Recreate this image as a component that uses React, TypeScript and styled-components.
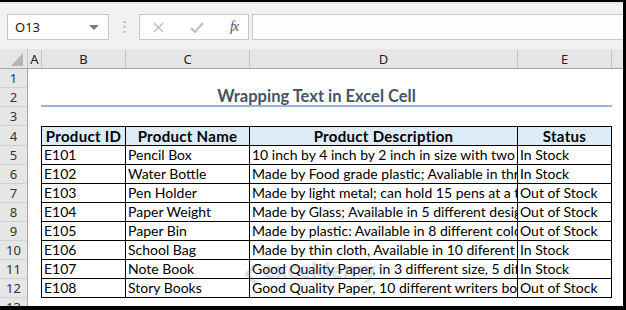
import React from "react";
import styled, { createGlobalStyle } from "styled-components";

const GlobalStyle = createGlobalStyle`
  html, body { margin: 0; padding: 0; background: #000; }
  * { box-sizing: border-box; }
`;

interface IProduct {
  id: string;
  name: string;
  description: string;
  status: string;
}

const products: IProduct[] = [
  { id: "E101", name: "Pencil Box", description: "10 inch by 4 inch by 2 inch in size with two compartments", status: "In Stock" },
  { id: "E102", name: "Water Bottle", description: "Made by Food grade plastic; Avaliable in three colors", status: "In Stock" },
  { id: "E103", name: "Pen Holder", description: "Made by light metal; can hold 15 pens at a time", status: "Out of Stock" },
  { id: "E104", name: "Paper Weight", description: "Made by Glass; Available in 5 different designs", status: "Out of Stock" },
  { id: "E105", name: "Paper Bin", description: "Made by plastic: Available in 8 different colors", status: "Out of Stock" },
  { id: "E106", name: "School Bag", description: "Made by thin cloth, Available in 10 diferent colors", status: "In Stock" },
  { id: "E107", name: "Note Book", description: "Good Quality Paper, in 3 different size, 5 different colors", status: "In Stock" },
  { id: "E108", name: "Story Books", description: "Good Quality Paper, 10 different writers books", status: "Out of Stock" },
];

// column widths in px (row header, A, B, C, D, E)
const W = { hdr: 28, a: 13, b: 85, c: 124, d: 268, e: 94 };

const Frame = styled.div`
  width: 626px;
  height: 310px;
  background: #000;
  padding: 2px 3px 4px 0;
`;

const Window = styled.div`
  height: 100%;
  display: flex;
  flex-direction: column;
  background: #fff;
  overflow: hidden;
  position: relative;
  font-family: "Lato", "Liberation Sans", sans-serif;
`;

const Toolbar = styled.div`
  height: 47px;
  flex: none;
  display: flex;
  align-items: flex-start;
  padding: 12px 0 0 7px;
  background: linear-gradient(#e4e4e4 0px, #f1f1f1 3px);
`;

const NameBox = styled.div`
  width: 102px;
  height: 26px;
  display: flex;
  align-items: center;
  justify-content: space-between;
  padding: 0 9px 0 7px;
  background: #fff;
  border: 1px solid #c6c6c6;
  font-family: "Noto Sans", "Open Sans", sans-serif;
  font-size: 13px;
  color: #222;
`;

const DropArrow = styled.span`
  width: 0;
  height: 0;
  border-left: 5px solid transparent;
  border-right: 5px solid transparent;
  border-top: 5px solid #7a7a7a;
`;

const Grip = styled.div`
  width: 30px;
  height: 26px;
  display: flex;
  align-items: center;
  justify-content: center;
`;

const FormulaButtons = styled.div`
  width: 110px;
  height: 26px;
  display: flex;
  align-items: center;
  justify-content: space-between;
  padding: 0 10px 0 13px;
  background: #fff;
  border: 1px solid #c6c6c6;
`;

const Fx = styled.span`
  font-family: "Liberation Serif", serif;
  font-style: italic;
  font-size: 14px;
  color: #555;
  letter-spacing: -1px;
`;

const FormulaInput = styled.div`
  flex: 1;
  height: 26px;
  margin-left: 3px;
  background: #fdfdfd;
  border: 1px solid #c6c6c6;
  border-right: none;
`;

const ColumnHeader = styled.div`
  height: 20px;
  flex: none;
  display: flex;
  background: #e6e6e6;
  border-bottom: 1px solid #a5a5a5;
`;

const Corner = styled.div`
  width: ${W.hdr}px;
  flex: none;
  display: flex;
  align-items: flex-end;
  justify-content: flex-end;
  padding: 0 4px 2px 0;
  border-right: 1px solid #c4c4c4;
`;

const ColHead = styled.div<{ $w: number; $grow?: boolean }>`
  width: ${(p) => p.$w}px;
  flex: ${(p) => (p.$grow ? 1 : "none")};
  display: flex;
  align-items: center;
  justify-content: center;
  border-right: ${(p) => (p.$grow ? "none" : "1px solid #c4c4c4")};
  margin-top: 1px;
  font-family: "Noto Sans", "Open Sans", sans-serif;
  font-size: 13px;
  color: #222;
`;

const Row = styled.div<{ $h?: number }>`
  height: ${(p) => p.$h ?? 19}px;
  flex: none;
  display: flex;
`;

const RowNum = styled.div`
  width: ${W.hdr}px;
  flex: none;
  display: flex;
  align-items: center;
  justify-content: center;
  background: #e6e6e6;
  border-right: 1px solid #a5a5a5;
  border-bottom: 1px solid #d0d0d0;
  font-family: "Noto Sans", "Open Sans", sans-serif;
  font-size: 13px;
  color: #333;
`;

const Cell = styled.div<{
  $w: number;
  $left?: boolean;
  $top?: boolean;
  $head?: boolean;
}>`
  width: ${(p) => p.$w}px;
  flex: none;
  overflow: hidden;
  white-space: nowrap;
  padding: 0 2px;
  line-height: 18px;
  font-size: ${(p) => (p.$head ? 15 : 14)}px;
  letter-spacing: ${(p) => (p.$head ? "0.3px" : "0")};
  color: #000;
  border-right: 1px solid #000;
  border-bottom: 1px solid #000;
  border-left: ${(p) => (p.$left ? "1px solid #000" : "none")};
  border-top: ${(p) => (p.$top ? "1px solid #000" : "none")};
  background: ${(p) => (p.$head ? "#ddebf7" : "#fff")};
  font-weight: ${(p) => (p.$head ? 700 : 400)};
  text-align: ${(p) => (p.$head ? "center" : "left")};
`;

const Blank = styled.div<{ $w: number }>`
  width: ${(p) => p.$w}px;
  flex: none;
`;

const TitleCell = styled.div`
  width: ${W.b + W.c + W.d + W.e}px;
  flex: none;
  padding-right: 20px;
  text-align: center;
  font-size: 16.5px;
  font-weight: 700;
  line-height: 17px;
  color: #44546a;
  border-bottom: 2px solid #9db3df;
`;

const Watermark = styled.div`
  position: absolute;
  left: 242px;
  top: 258px;
  display: flex;
  align-items: center;
  gap: 3px;
  opacity: 0.22;
  pointer-events: none;
`;

const WatermarkText = styled.div`
  display: flex;
  flex-direction: column;
  line-height: 1;
  color: #4a6fb5;
  font-family: "Open Sans", sans-serif;
  font-weight: 700;
  font-size: 21px;
  small {
    font-size: 7px;
    font-weight: 400;
    letter-spacing: 1px;
  }
`;

function TableRow({ n, p }: { n: number; p: IProduct }) {
  return (
    <Row>
      <RowNum>{n}</RowNum>
      <Blank $w={W.a} />
      <Cell $w={W.b} $left>{p.id}</Cell>
      <Cell $w={W.c}>{p.name}</Cell>
      <Cell $w={W.d}>{p.description}</Cell>
      <Cell $w={W.e}>{p.status}</Cell>
    </Row>
  );
}

export default function App() {
  return (
    <Frame>
      <GlobalStyle />
      <Window>
        <Toolbar>
          <NameBox>
            O13
            <DropArrow />
          </NameBox>
          <Grip>
            <svg width="3" height="12" viewBox="0 0 3 12">
              <rect x="0.5" y="0" width="2" height="2" fill="#b3b3b3" />
              <rect x="0.5" y="5" width="2" height="2" fill="#b3b3b3" />
              <rect x="0.5" y="10" width="2" height="2" fill="#b3b3b3" />
            </svg>
          </Grip>
          <FormulaButtons>
            <svg width="11" height="11" viewBox="0 0 11 11">
              <path d="M1 1 L10 10 M10 1 L1 10" stroke="#bdbdbd" strokeWidth="1.4" />
            </svg>
            <svg width="14" height="11" viewBox="0 0 14 11">
              <path d="M1 6 L5 10 L13 1" stroke="#bdbdbd" strokeWidth="2" fill="none" />
            </svg>
            <Fx>fx</Fx>
          </FormulaButtons>
          <FormulaInput />
        </Toolbar>

        <ColumnHeader>
          <Corner>
            <svg width="12" height="13" viewBox="0 0 12 13">
              <polygon points="12,0 12,13 0,13" fill="#b5b5b5" />
            </svg>
          </Corner>
          <ColHead $w={W.a + 1}>A</ColHead>
          <ColHead $w={W.b - 1}>B</ColHead>
          <ColHead $w={W.c}>C</ColHead>
          <ColHead $w={W.d}>D</ColHead>
          <ColHead $w={W.e}>E</ColHead>
          <ColHead $w={0} $grow />
        </ColumnHeader>

        <Row>
          <RowNum>1</RowNum>
        </Row>
        <Row>
          <RowNum>2</RowNum>
          <Blank $w={W.a} />
          <TitleCell>Wrapping Text in Excel Cell</TitleCell>
        </Row>
        <Row>
          <RowNum>3</RowNum>
        </Row>
        <Row $h={20}>
          <RowNum>4</RowNum>
          <Blank $w={W.a} />
          <Cell $w={W.b} $left $top $head>Product ID</Cell>
          <Cell $w={W.c} $top $head>Product Name</Cell>
          <Cell $w={W.d} $top $head>Product Description</Cell>
          <Cell $w={W.e} $top $head>Status</Cell>
        </Row>
        {products.map((p, i) => (
          <TableRow key={p.id} n={i + 5} p={p} />
        ))}
        <Row>
          <RowNum>13</RowNum>
        </Row>

        <Watermark>
          <svg width="18" height="22" viewBox="0 0 18 22">
            <path d="M2 11 L11 2 L16 2 L8 11 L16 20 L11 20 Z" fill="#4a6fb5" />
          </svg>
          <WatermarkText>
            exceldemy
            <small>EXCEL · DATA · BI</small>
          </WatermarkText>
        </Watermark>
      </Window>
    </Frame>
  );
}
